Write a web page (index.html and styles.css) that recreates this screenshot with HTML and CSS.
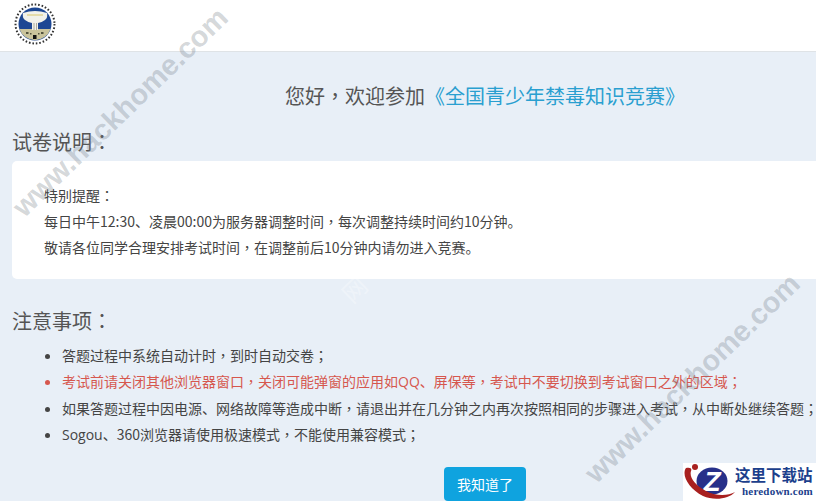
FILE: index.html
```html
<!DOCTYPE html>
<html lang="zh-CN">
<head>
<meta charset="utf-8">
<title>全国青少年禁毒知识竞赛</title>
<link rel="stylesheet" href="styles.css">
</head>
<body>
<header class="topbar">
  <svg class="emblem" viewBox="0 0 44 44" aria-hidden="true">
    <circle cx="22" cy="21" r="19.5" fill="none" stroke="#333" stroke-width="2" stroke-dasharray="1.6 1.9"/>
    <circle cx="22" cy="21" r="16.5" fill="#1d4793"/>
    <path d="M6.4 26h31.2a16.5 16.5 0 0 1-31.2 0z" fill="#c9c39b"/>
    <path d="M10 10q12-4 24 0q1 5-2 7q-4 3-7 3v7h-6v-7q-3 0-7-3q-3-2-2-7z" fill="#f1f1ea"/>
    <path d="M14 12h16" stroke="#d8c66a" stroke-width="1"/>
    <path d="M21 20v7M23.5 20v7" stroke="#9a9a8a" stroke-width=".8"/>
    <rect x="20" y="32" width="3.5" height="4" fill="#111"/>
    <path d="M13 29h2.5v2H13zM28 29h2.5v2H28zM17 30h1.5v1.5H17zM25 30h1.5v1.5H25z" fill="#55553f"/>
  </svg>
</header>

<main class="content">
  <h1 class="welcome">您好<span class="mark" lang="zh-TW">，</span>欢迎参加<span class="contest">《全国青少年禁毒知识竞赛》</span></h1>

  <h2 class="section-title">试卷说明<span class="mark" lang="zh-TW">：</span></h2>
  <section class="notice">
    <p>特别提醒<span class="mark" lang="zh-TW">：</span></p>
    <p>每日中午12:30、凌晨00:00为服务器调整时间<span class="mark" lang="zh-TW">，</span>每次调整持续时间约10分钟。</p>
    <p>敬请各位同学合理安排考试时间<span class="mark" lang="zh-TW">，</span>在调整前后10分钟内请勿进入竞赛。</p>
  </section>

  <h2 class="section-title section-title-notes">注意事项<span class="mark" lang="zh-TW">：</span></h2>
  <ul class="rules">
    <li>答题过程中系统自动计时<span class="mark" lang="zh-TW">，</span>到时自动交卷<span class="mark" lang="zh-TW">；</span></li>
    <li class="warn">考试前请关闭其他浏览器窗口<span class="mark" lang="zh-TW">，</span>关闭可能弹窗的应用如<span class="latin">QQ</span>、屏保等<span class="mark" lang="zh-TW">，</span>考试中不要切换到考试窗口之外的区域<span class="mark" lang="zh-TW">；</span></li>
    <li>如果答题过程中因电源、网络故障等造成中断<span class="mark" lang="zh-TW">，</span>请退出并在几分钟之内再次按照相同的步骤进入考试<span class="mark" lang="zh-TW">，</span>从中断处继续答题<span class="mark" lang="zh-TW">；</span></li>
    <li><span class="latin">Sogou</span>、360浏览器请使用极速模式<span class="mark" lang="zh-TW">，</span>不能使用兼容模式<span class="mark" lang="zh-TW">；</span></li>
  </ul>

  <div class="actions"><button class="confirm" type="button">我知道了</button></div>
</main>

<div class="wm wm-a">www.hackhome.com</div>
<div class="wm wm-b">www.hackhome.com</div>
<div class="wm-faint">网</div>

<div class="site-badge">
  <svg class="badge-mark" viewBox="0 0 52 38" aria-hidden="true">
    <ellipse cx="29" cy="18" rx="15.5" ry="13.5" fill="#27308a"/>
    <text x="29" y="28" class="badge-z">Z</text>
    <path d="M3 5C-2 12 6 26 20 33c11 5 26 3 32-4-7 4-20 4-29-1C12 22 6 14 8 8c1-2 0-4-5-3z" fill="#a8201f"/>
    <circle cx="12" cy="4" r="3" fill="#a8201f"/>
  </svg>
  <div class="badge-text">
    <div class="badge-cn">这里下载站</div>
    <div class="badge-en">heredown.com</div>
  </div>
</div>
</body>
</html>
```
FILE: styles.css
```css
* { box-sizing: border-box; }
html, body { margin: 0; height: 100%; }
body {
  position: relative;
  width: 816px;
  height: 501px;
  overflow: hidden;
  background: #e8eff7;
  color: #444;
  font-family: "Noto Sans CJK SC", "Liberation Sans", sans-serif;
  font-size: 14px;
}
.topbar {
  height: 52px;
  background: #fff;
  border-bottom: 1px solid #dfe3e6;
  padding: 3px 0 0 13px;
}
.emblem { display: block; width: 44px; height: 44px; }
.content { padding: 30px 0 0 12px; }
.welcome {
  margin: 0 0 18px 273px;
  font-size: 20px;
  font-weight: 400;
  line-height: 28px;
  white-space: nowrap;
  color: #555;
}
.contest { color: #2a9fd0; }
.mark { font-family: "Noto Sans CJK TC", sans-serif; }
.latin { font-family: "Open Sans", sans-serif; }
.section-title {
  margin: 0 0 5px;
  font-size: 20px;
  font-weight: 400;
  line-height: 28px;
  color: #555;
}
.section-title-notes { margin: 28px 0 7px; }
.notice {
  height: 118px;
  padding: 21px 0 0 32px;
  background: #fff;
  border-radius: 5px 0 0 5px;
}
.notice p { margin: 0; line-height: 26px; white-space: nowrap; }
.rules {
  margin: 0;
  padding: 0 0 0 50px;
  line-height: 26px;
  white-space: nowrap;
}
.warn { color: #d6574e; }
.actions { margin: 19px 0 0 432px; }
.confirm {
  display: block;
  width: 82px;
  height: 34px;
  border: 0;
  border-radius: 4px;
  background: #0fa3df;
  color: #fff;
  font: 14px "Noto Sans CJK SC", sans-serif;
}
.wm {
  position: absolute;
  width: 320px;
  height: 40px;
  text-align: center;
  font: bold 29px/40px "Liberation Sans", sans-serif;
  white-space: nowrap;
  color: rgba(110, 120, 130, 0.3);
  transform: rotate(-44deg);
  pointer-events: none;
}
.wm-a { left: -40px; top: 92px; }
.wm-b { left: 532px; top: 358px; }
.wm-faint {
  position: absolute;
  left: 342px;
  top: 274px;
  font-size: 24px;
  line-height: 30px;
  color: rgba(255, 255, 255, 0.3);
  transform: rotate(-44deg);
  pointer-events: none;
}
.site-badge {
  position: absolute;
  left: 683px;
  top: 463px;
  width: 133px;
  height: 38px;
  background: #fff;
  display: flex;
}
.badge-mark { width: 52px; height: 38px; flex: none; }
.badge-z {
  fill: #fff;
  font: italic bold 28px "Liberation Sans", sans-serif;
  text-anchor: middle;
}
.badge-cn {
  font-size: 15.5px;
  font-weight: 700;
  line-height: 22px;
  color: #1c3f8c;
  white-space: nowrap;
}
.badge-en {
  margin-left: 7px;
  font: bold 11px/13px "Liberation Serif", serif;
  letter-spacing: .2px;
  color: #1c3f8c;
  white-space: nowrap;
}
```
